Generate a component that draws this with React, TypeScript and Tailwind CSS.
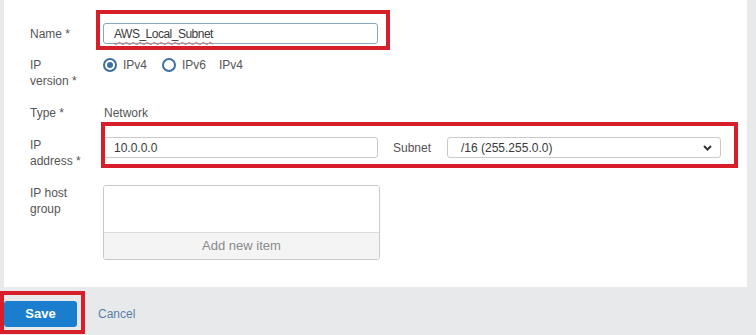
import React from "react";

const Label = ({ lines }: { lines: string[] }) => (
  <div className="w-[73px] shrink-0 leading-[16px]">
    {lines.map((l) => (
      <div key={l}>{l}</div>
    ))}
  </div>
);

const Radio = ({ checked, label }: { checked?: boolean; label: string }) => (
  <div className="flex items-center">
    <span className="flex h-[14px] w-[14px] items-center justify-center rounded-full border-2 border-[#3d6fa3]">
      {checked && <span className="h-[6px] w-[6px] rounded-full bg-[#3d6fa3]" />}
    </span>
    <span className="ml-[6px]">{label}</span>
  </div>
);

export default function App() {
  return (
    <div className="relative h-[335px] w-[756px] overflow-hidden bg-[#e8e9eb] font-['Liberation_Sans',Arial,sans-serif] text-[12px] text-[#555]">
      <div className="ml-[4px] h-[287px] w-[743px] bg-white pl-[26px] pt-[23px]">
        {/* name */}
        <div className="flex h-[21px] items-center">
          <div className="w-[73px] shrink-0">Name *</div>
          <div className="flex h-[21px] w-[275px] items-center rounded-[3px] border border-[#86a9bc] pl-[10px] text-[#3a3a3a]">
            <span className="tracking-[-0.5px] underline decoration-[#d96a6a] decoration-wavy decoration-1 underline-offset-[3px]">
              AWS_Local_Subnet
            </span>
          </div>
        </div>

        {/* ip version */}
        <div className="mt-[13px] flex">
          <Label lines={["IP", "version *"]} />
          <div className="flex h-[16px] items-center">
            <Radio checked label="IPv4" />
            <div className="ml-[15px]">
              <Radio label="IPv6" />
            </div>
            <span className="ml-[13px]">IPv4</span>
          </div>
        </div>

        {/* type */}
        <div className="mt-[16px] flex leading-[16px]">
          <div className="w-[74px] shrink-0">Type *</div>
          <div>Network</div>
        </div>

        {/* ip address */}
        <div className="mt-[16px] flex">
          <Label lines={["IP", "address *"]} />
          <div className="flex h-[21px] w-[275px] items-center rounded-[3px] border border-[#c9c9c9] pl-[10px] text-[#3a3a3a]">
            10.0.0.0
          </div>
          <div className="ml-[15px] flex h-[21px] w-[54px] items-center">Subnet</div>
          <div className="flex h-[21px] w-[274px] items-center justify-between rounded-[3px] border border-[#c9c9c9] pl-[13px] pr-[8px] text-[#3a3a3a]">
            <span>/16 (255.255.0.0)</span>
            <svg width="9" height="6" viewBox="0 0 9 6">
              <path d="M1 1l3.5 3.5L8 1" fill="none" stroke="#333" strokeWidth="2" />
            </svg>
          </div>
        </div>

        {/* host group */}
        <div className="mt-[16px] flex">
          <Label lines={["IP host", "group"]} />
          <div className="flex h-[75px] w-[277px] flex-col overflow-hidden rounded-[3px] border border-[#c9c9c9]">
            <div className="h-[46px] bg-white" />
            <div className="flex flex-1 items-center justify-center border-t border-[#dcdcdc] bg-[#f4f4f5] text-[13px] text-[#8a8a8a]">
              Add new item
            </div>
          </div>
        </div>
      </div>

      {/* footer */}
      <div className="flex items-center pl-[4px] pt-[14px]">
        <button className="h-[26px] w-[73px] rounded-[3px] bg-[#1b7dcd] text-[13px] font-bold text-white">
          Save
        </button>
        <span className="ml-[21px] text-[#5b7fa8]">Cancel</span>
      </div>

      {/* annotation boxes */}
      <div className="pointer-events-none absolute left-[96px] top-[10px] h-[40px] w-[294px] border-4 border-[#d71e2b]" />
      <div className="pointer-events-none absolute left-[101px] top-[122px] h-[46px] w-[637px] border-4 border-[#d71e2b]" />
      <div className="pointer-events-none absolute left-0 top-[291px] h-[43px] w-[85px] border-4 border-[#d71e2b]" />
    </div>
  );
}
